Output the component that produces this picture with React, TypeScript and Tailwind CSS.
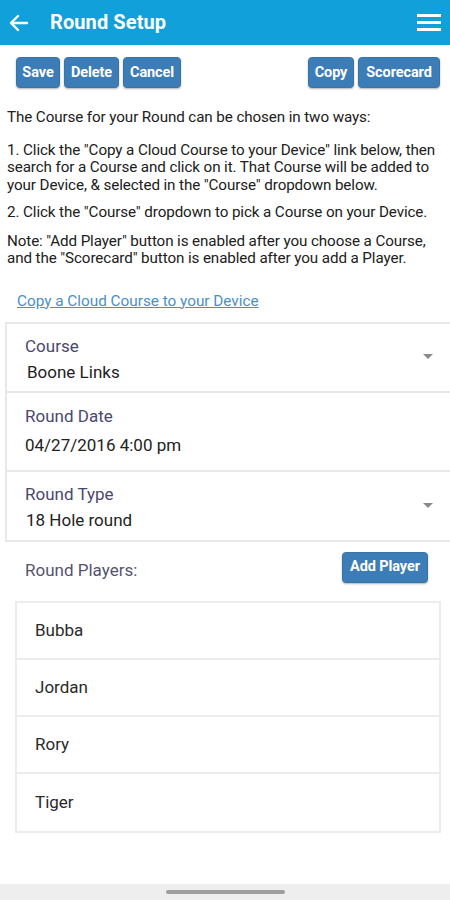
import React from "react";

const Btn = ({ children, className = "" }: { children: React.ReactNode; className?: string }) => (
  <button
    className={
      "h-[31px] rounded-[4px] bg-[#3d7db7] text-white font-bold text-[14.5px] tracking-[-0.1px] px-[4px] shadow-[0_1px_2px_rgba(0,0,0,0.3)] border border-[#3874a8] " +
      className
    }
  >
    {children}
  </button>
);

const Caret = () => (
  <svg width="10" height="6" viewBox="0 0 10 6" className="mr-[17px]">
    <path d="M0 0 L10 0 L5 5 Z" fill="#8a8a8a" />
  </svg>
);

export default function App() {
  return (
    <div className="w-[450px] h-[900px] bg-white flex flex-col font-['Roboto',sans-serif] text-[#222]">
      <div className="h-[45px] bg-[#12a0da] flex items-center shrink-0">
        <svg width="20" height="18" viewBox="0 0 20 18" className="ml-[9px]">
          <path d="M18 9 H3 M9 2 L2 9 L9 16" stroke="white" strokeWidth="2.4" fill="none" strokeLinecap="round" strokeLinejoin="round" />
        </svg>
        <div className="ml-[21px] text-white text-[20px] font-bold tracking-[0.1px] -mt-[2px]">Round Setup</div>
        <div className="ml-auto mr-[9px] flex flex-col gap-[4.5px]">
          <div className="w-[24px] h-[2.5px] bg-white" />
          <div className="w-[24px] h-[2.5px] bg-white" />
          <div className="w-[24px] h-[2.5px] bg-white" />
        </div>
      </div>

      <div className="flex px-[16px] mt-[12px]">
        <div className="flex gap-[4px]">
          <Btn className="w-[44px]">Save</Btn>
          <Btn className="w-[55px]">Delete</Btn>
          <Btn className="w-[58px]">Cancel</Btn>
        </div>
        <div className="flex gap-[4px] ml-auto mr-[-6px]">
          <Btn className="w-[46px]">Copy</Btn>
          <Btn className="w-[82px]">Scorecard</Btn>
        </div>
      </div>

      <div className="pl-[7px] pr-[1px] mt-[21px] text-[15.2px] leading-[17.5px] tracking-[-0.1px] text-[#202020]">
        <p>The Course for your Round can be chosen in two ways:</p>
        <p className="mt-[15px]">
          1. Click the "Copy a Cloud Course to your Device" link below, then
          <br />
          search for a Course and click on it. That Course will be added to
          <br />
          your Device, &amp; selected in the "Course" dropdown below.
        </p>
        <p className="mt-[10px]">2. Click the "Course" dropdown to pick a Course on your Device.</p>
        <p className="mt-[11px]">
          Note: "Add Player" button is enabled after you choose a Course,
          <br />
          and the "Scorecard" button is enabled after you add a Player.
        </p>
      </div>

      <div className="px-[17px] mt-[23px] text-[15.3px] leading-[20px] text-[#4a8fcb] underline">Copy a Cloud Course to your Device</div>

      <div className="ml-[5px] mt-[11px] border-l-2 border-t-2 border-[#e8e8e8]">
        <div className="h-[69px] flex items-center border-b-2 border-[#e8e8e8]">
          <div className="flex-1 self-start pl-[18px] pt-[12px]">
            <div className="text-[17px] text-[#4a4870] leading-[20px]">Course</div>
            <div className="text-[17px] text-[#222] leading-[20px] mt-[6px] pl-[2px]">Boone Links</div>
          </div>
          <Caret />
        </div>
        <div className="h-[79px] flex border-b-2 border-[#e8e8e8]">
          <div className="flex-1 pl-[18px] pt-[13px]">
            <div className="text-[17px] text-[#4a4870] leading-[20px]">Round Date</div>
            <div className="text-[17px] text-[#222] leading-[20px] mt-[9px]">04/27/2016 4:00 pm</div>
          </div>
        </div>
        <div className="h-[70px] flex items-center border-b-2 border-[#e8e8e8]">
          <div className="flex-1 self-start pl-[18px] pt-[12px]">
            <div className="text-[17px] text-[#4a4870] leading-[20px]">Round Type</div>
            <div className="text-[17px] text-[#222] leading-[20px] mt-[6px] pl-[1px]">18 Hole round</div>
          </div>
          <Caret />
        </div>
      </div>

      <div className="flex items-center mt-[10px] pl-[25px] pr-[22px]">
        <div className="text-[17px] text-[#55536e] mt-[6px]">Round Players:</div>
        <Btn className="ml-auto w-[86px] h-[31px]">Add Player</Btn>
      </div>

      <div className="ml-[15px] mr-[9px] mt-[18px] border-2 border-[#ececec]">
        {["Bubba", "Jordan", "Rory", "Tiger"].map((n, i) => (
          <div key={n} className={"h-[57px] flex items-center pl-[18px] text-[17px] text-[#2a2a2a] " + (i < 3 ? "border-b-2 border-[#ececec]" : "")}>
            {n}
          </div>
        ))}
      </div>

      <div className="mt-auto h-[16px] bg-[#eeeeee] flex justify-center items-center">
        <div className="w-[119px] h-[4px] rounded-full bg-[#9e9e9e]" />
      </div>
    </div>
  );
}
